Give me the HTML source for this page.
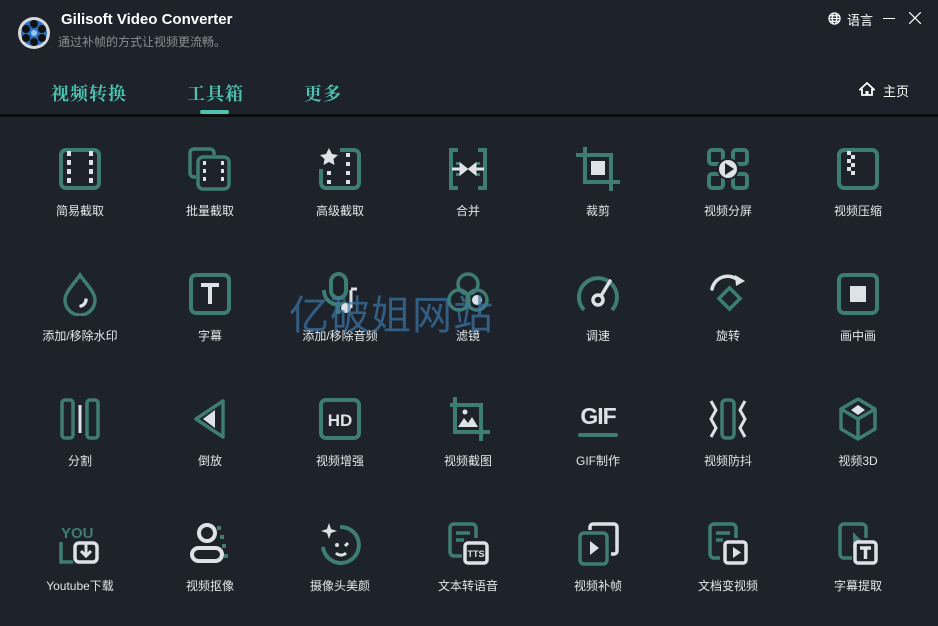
<!DOCTYPE html>
<html><head><meta charset="utf-8"><style>
*{margin:0;padding:0;box-sizing:border-box}
body{width:938px;height:626px;background:#1e222a;font-family:"Liberation Sans","Noto Sans CJK SC",sans-serif;color:#e3e6ea;position:relative;overflow:hidden}
.a{position:absolute}
.cell{position:absolute;width:130px;text-align:center}
.cell svg{display:block;margin:0 auto;width:44px;height:44px}
.cell span{display:block;margin-top:12px;font-size:12px;color:#e3e6ea;line-height:16px}
.tab{position:absolute;top:80px;font-family:"Noto Serif CJK SC","Noto Sans CJK SC",serif;font-size:18px;font-weight:bold;color:#4ec2b0;letter-spacing:1px}
</style></head><body>
<svg class="a" style="left:17px;top:16px" width="34" height="34" viewBox="0 0 34 34"><circle cx="17" cy="17" r="16" fill="#d8d8d8"/><circle cx="17" cy="17" r="13" fill="#2a6fc0"/><g fill="#111"><circle cx="17" cy="8" r="4"/><circle cx="17" cy="26" r="4"/><circle cx="9" cy="13" r="4"/><circle cx="25" cy="13" r="4"/><circle cx="9" cy="22" r="4"/><circle cx="25" cy="22" r="4"/></g><circle cx="17" cy="17" r="3" fill="#9cc4f0"/></svg>
<div class="a" style="left:61px;top:11px;font-size:15px;font-weight:bold;color:#fff">Gilisoft Video Converter</div>
<div class="a" style="left:58px;top:33px;font-size:12px;color:#8a8f96">通过补帧的方式让视频更流畅。</div>
<svg class="a" style="left:828px;top:12px" width="13" height="13" viewBox="0 0 14 14" fill="none" stroke="#fff" stroke-width="1.3"><circle cx="7" cy="7" r="6"/><ellipse cx="7" cy="7" rx="2.5" ry="6"/><path d="M1 7h12M2 4h10M2 10h10"/></svg>
<div class="a" style="left:847px;top:10px;font-size:13px;color:#fff">语言</div>
<div class="a" style="left:883px;top:18px;width:12px;height:1px;background:#fff"></div>
<svg class="a" style="left:909px;top:12px" width="12" height="12" viewBox="0 0 12 12" stroke="#fff" stroke-width="1.2"><path d="M0 0L12 12M12 0L0 12"/></svg>
<svg class="a" style="left:859px;top:82px" width="16" height="14" viewBox="0 0 16 14"><path d="M8 1L1 7.5h2V13h10V7.5h2z" fill="none" stroke="#fff" stroke-width="1.8"/><rect x="6.5" y="9" width="3" height="4" fill="#fff"/></svg>
<div class="a" style="left:883px;top:81px;font-size:13px;color:#fff">主页</div>
<div class="tab" style="left:51px">视频转换</div>
<div class="tab" style="left:187px">工具箱</div>
<div class="tab" style="left:304px">更多</div>
<div class="a" style="left:200px;top:110px;width:29px;height:4px;border-radius:2px;background:#4ec2b0"></div>
<div class="a" style="left:0;top:114px;width:938px;height:3px;background:#0a0b0d"></div>

<!-- row1 -->
<div class="cell" style="left:15px;top:147px"><svg viewBox="0 0 44 44"><rect x="3" y="3" width="38" height="38" rx="5" fill="none" stroke="#3d7d74" stroke-width="4"/><g fill="#dde2e8"><rect x="9" y="4" width="4" height="5"/><rect x="9" y="13" width="4" height="5"/><rect x="9" y="22" width="4" height="5"/><rect x="9" y="31" width="4" height="5"/><rect x="31" y="4" width="4" height="5"/><rect x="31" y="13" width="4" height="5"/><rect x="31" y="22" width="4" height="5"/><rect x="31" y="31" width="4" height="5"/></g></svg><span>简易截取</span></div>
<div class="cell" style="left:145px;top:147px"><svg viewBox="0 0 44 44" fill="none" stroke="#3d7d74" stroke-width="3.5"><path d="M8 30H6a4 4 0 0 1-4-4V6a4 4 0 0 1 4-4h16a4 4 0 0 1 4 4v2"/><rect x="10" y="10" width="31" height="32" rx="5"/><g fill="#dde2e8" stroke="none"><rect x="15" y="14" width="3" height="4"/><rect x="15" y="22" width="3" height="4"/><rect x="15" y="30" width="3" height="4"/><rect x="33" y="14" width="3" height="4"/><rect x="33" y="22" width="3" height="4"/><rect x="33" y="30" width="3" height="4"/></g></svg><span>批量截取</span></div>
<div class="cell" style="left:275px;top:147px"><svg viewBox="0 0 44 44" fill="none" stroke="#3d7d74" stroke-width="4"><path d="M22 3h14a5 5 0 0 1 5 5v28a5 5 0 0 1-5 5H8a5 5 0 0 1-5-5V22"/><path d="M11 1l3 6 6 1-4.5 4 1 6-5.5-3-5.5 3 1-6L2 8l6-1z" fill="#dde2e8" stroke="none"/><g fill="#dde2e8" stroke="none"><rect x="28" y="6" width="4" height="4"/><rect x="28" y="15" width="4" height="4"/><rect x="28" y="24" width="4" height="4"/><rect x="28" y="33" width="4" height="4"/><rect x="9" y="24" width="4" height="4"/><rect x="9" y="33" width="4" height="4"/></g></svg><span>高级截取</span></div>
<div class="cell" style="left:403px;top:147px"><svg viewBox="0 0 44 44" fill="none" stroke="#3d7d74" stroke-width="4"><path d="M12 3H5v38h7M12 18v-3M12 29v-3M32 3h7v38h-7M32 18v-3M32 29v-3"/><path d="M6 22h9M15 18v8l5-4zM38 22h-9M29 18v8l-5-4z" fill="#dde2e8" stroke="#dde2e8" stroke-width="3"/></svg><span>合并</span></div>
<div class="cell" style="left:533px;top:147px"><svg viewBox="0 0 44 44" fill="none" stroke="#3d7d74" stroke-width="4"><path d="M9 0v35h35M0 8h35v36"/><rect x="15" y="14" width="14" height="14" fill="#dde2e8" stroke="none"/></svg><span>裁剪</span></div>
<div class="cell" style="left:663px;top:147px"><svg viewBox="0 0 44 44" fill="none" stroke="#3d7d74" stroke-width="4"><rect x="3" y="3" width="14" height="14" rx="3"/><rect x="27" y="3" width="14" height="14" rx="3"/><rect x="3" y="27" width="14" height="14" rx="3"/><rect x="27" y="27" width="14" height="14" rx="3"/><circle cx="22" cy="22" r="10" fill="#dde2e8" stroke="#1e222a" stroke-width="2"/><path d="M19 16v12l9-6z" fill="#1e222a" stroke="none"/></svg><span>视频分屏</span></div>
<div class="cell" style="left:793px;top:147px"><svg viewBox="0 0 44 44"><rect x="3" y="3" width="38" height="38" rx="5" fill="none" stroke="#3d7d74" stroke-width="4"/><g fill="#dde2e8"><rect x="11" y="4" width="4" height="4"/><rect x="15" y="8" width="4" height="4"/><rect x="11" y="12" width="4" height="4"/><rect x="15" y="16" width="4" height="4"/><rect x="11" y="20" width="4" height="4"/><rect x="15" y="24" width="4" height="4"/></g></svg><span>视频压缩</span></div>
<!-- row2 -->
<div class="cell" style="left:15px;top:272px"><svg viewBox="0 0 44 44" fill="none"><path d="M22 3C16 12 7 20 7 28a15 15 0 0 0 30 0C37 20 28 12 22 3z" stroke="#3d7d74" stroke-width="3.5"/><path d="M28 28a7 7 0 0 1-5 6" stroke="#dde2e8" stroke-width="3.5" stroke-linecap="round"/></svg><span>添加/移除水印</span></div>
<div class="cell" style="left:145px;top:272px"><svg viewBox="0 0 44 44"><rect x="3" y="3" width="38" height="38" rx="5" fill="none" stroke="#3d7d74" stroke-width="4"/><path d="M13 13h18M22 13v19" stroke="#dde2e8" stroke-width="4"/></svg><span>字幕</span></div>
<div class="cell" style="left:275px;top:272px"><svg viewBox="0 0 44 44" fill="none" stroke="#3d7d74" stroke-width="4"><rect x="13" y="2" width="15" height="24" rx="7.5"/><path d="M6 18a14 14 0 0 0 22 12M20 33v9"/><path d="M33 18v18" stroke="#dde2e8" stroke-width="3"/><path d="M33 17h6" stroke="#dde2e8" stroke-width="3"/><circle cx="28" cy="36" r="5" fill="#dde2e8" stroke="none"/></svg><span>添加/移除音频</span></div>
<div class="cell" style="left:403px;top:272px"><svg viewBox="0 0 44 44" fill="none" stroke="#3d7d74" stroke-width="3.5"><circle cx="22" cy="12" r="10"/><circle cx="13" cy="28" r="10"/><circle cx="31" cy="28" r="10"/><circle cx="31" cy="28" r="5" fill="#dde2e8" stroke="none"/></svg><span>滤镜</span></div>
<div class="cell" style="left:533px;top:272px"><svg viewBox="0 0 44 44" fill="none"><path d="M8 38A19 19 0 1 1 36 38" stroke="#3d7d74" stroke-width="4"/><path d="M25 24L34 9" stroke="#dde2e8" stroke-width="3.5" stroke-linecap="round"/><circle cx="22" cy="28" r="5" stroke="#dde2e8" stroke-width="3.5"/></svg><span>调速</span></div>
<div class="cell" style="left:663px;top:272px"><svg viewBox="0 0 44 44" fill="none"><path d="M6 17a16 16 0 0 1 26-9" stroke="#dde2e8" stroke-width="3.5" stroke-linecap="round"/><path d="M29 3l10 6-9 5z" fill="#dde2e8"/><rect x="16" y="19" width="15" height="15" transform="rotate(45 23.5 26.5)" stroke="#3d7d74" stroke-width="3.5"/></svg><span>旋转</span></div>
<div class="cell" style="left:793px;top:272px"><svg viewBox="0 0 44 44"><rect x="3" y="3" width="38" height="38" rx="5" fill="none" stroke="#3d7d74" stroke-width="4"/><rect x="14" y="14" width="16" height="16" fill="#dde2e8"/></svg><span>画中画</span></div>
<!-- row3 -->
<div class="cell" style="left:15px;top:397px"><svg viewBox="0 0 44 44" fill="none" stroke="#3d7d74" stroke-width="3.5"><rect x="4" y="3" width="11" height="38" rx="3"/><rect x="29" y="3" width="11" height="38" rx="3"/><path d="M22 8v28" stroke="#dde2e8" stroke-width="3"/></svg><span>分割</span></div>
<div class="cell" style="left:145px;top:397px"><svg viewBox="0 0 44 44" fill="none"><path d="M35 4v36L8 22z" stroke="#3d7d74" stroke-width="3.5" stroke-linejoin="round"/><path d="M27 13v18l-12-9z" fill="#dde2e8"/></svg><span>倒放</span></div>
<div class="cell" style="left:275px;top:397px"><svg viewBox="0 0 44 44"><rect x="3" y="3" width="38" height="38" rx="5" fill="none" stroke="#3d7d74" stroke-width="4"/><text x="22" y="29" text-anchor="middle" font-family="Liberation Sans" font-weight="bold" font-size="17" fill="#dde2e8">HD</text></svg><span>视频增强</span></div>
<div class="cell" style="left:403px;top:397px"><svg viewBox="0 0 44 44" fill="none" stroke="#3d7d74" stroke-width="4"><path d="M9 0v35h35M4 8h31v36"/><path d="M12 30l6-9 4 5 4-6 6 10z" fill="#dde2e8" stroke="none"/><circle cx="19" cy="15" r="2.5" fill="#dde2e8" stroke="none"/></svg><span>视频截图</span></div>
<div class="cell" style="left:533px;top:397px"><svg viewBox="0 0 44 44"><text x="22" y="27" text-anchor="middle" font-family="Liberation Sans" font-weight="bold" font-size="23" fill="#dde2e8" letter-spacing="-1">GIF</text><rect x="2" y="36" width="40" height="4" rx="2" fill="#3d7d74"/></svg><span>GIF制作</span></div>
<div class="cell" style="left:663px;top:397px"><svg viewBox="0 0 44 44" fill="none"><rect x="16" y="3" width="12" height="38" rx="4" stroke="#3d7d74" stroke-width="3.5"/><path d="M5 4l5 9-5 9 5 9-5 9M39 4l-5 9 5 9-5 9 5 9" stroke="#dde2e8" stroke-width="3"/></svg><span>视频防抖</span></div>
<div class="cell" style="left:793px;top:397px"><svg viewBox="0 0 44 44" fill="none" stroke="#3d7d74" stroke-width="3.5" stroke-linejoin="round"><path d="M22 2l17 10v20L22 42 5 32V12zM5 12l17 10 17-10M22 22v20"/><path d="M22 8l7 5-7 5-7-5z" fill="#dde2e8" stroke="none"/></svg><span>视频3D</span></div>
<!-- row4 -->
<div class="cell" style="left:15px;top:522px"><svg viewBox="0 0 44 44"><text x="3" y="16" font-family="Liberation Sans" font-weight="bold" font-size="15" fill="#3d7d74">YOU</text><path d="M3 20v20h12" fill="none" stroke="#3d7d74" stroke-width="3.5"/><rect x="17" y="21" width="22" height="19" rx="4" fill="none" stroke="#dde2e8" stroke-width="3.5"/><path d="M28 22v11M23 29l5 5 5-5" fill="none" stroke="#dde2e8" stroke-width="3"/></svg><span>Youtube下载</span></div>
<div class="cell" style="left:145px;top:522px"><svg viewBox="0 0 44 44" fill="none" stroke="#dde2e8" stroke-width="4"><circle cx="19" cy="11" r="8"/><rect x="4" y="26" width="30" height="13" rx="6.5"/><path d="M31 4v4M34 13v4M36 22v4M38 32v4" stroke="#3d7d74"/></svg><span>视频抠像</span></div>
<div class="cell" style="left:275px;top:522px"><svg viewBox="0 0 44 44" fill="none"><path d="M22 5a18 18 0 1 1-17 20" stroke="#3d7d74" stroke-width="4"/><path d="M11 1l2 6 6 2-6 2-2 6-2-6-6-2 6-2z" fill="#dde2e8"/><circle cx="19" cy="23" r="2" fill="#dde2e8"/><path d="M27 24l3-3M18 31a7 7 0 0 0 10 0" stroke="#dde2e8" stroke-width="3"/></svg><span>摄像头美颜</span></div>
<div class="cell" style="left:403px;top:522px"><svg viewBox="0 0 44 44" fill="none"><path d="M16 34H8a4 4 0 0 1-4-4V6a4 4 0 0 1 4-4h18a4 4 0 0 1 4 4v10" stroke="#3d7d74" stroke-width="3.5"/><path d="M10 11h14M10 18h8" stroke="#3d7d74" stroke-width="3.5"/><rect x="19" y="21" width="22" height="20" rx="3" fill="#1e222a" stroke="#dde2e8" stroke-width="3.5"/><text x="30" y="35" text-anchor="middle" font-family="Liberation Sans" font-weight="bold" font-size="9" fill="#dde2e8">TTS</text></svg><span>文本转语音</span></div>
<div class="cell" style="left:533px;top:522px"><svg viewBox="0 0 44 44" fill="none"><path d="M14 8V5a3 3 0 0 1 3-3h21a3 3 0 0 1 3 3v24a3 3 0 0 1-3 3h-3" stroke="#dde2e8" stroke-width="3.5"/><rect x="4" y="11" width="27" height="31" rx="4" stroke="#3d7d74" stroke-width="3.5"/><path d="M14 19v14l9-7z" fill="#dde2e8"/></svg><span>视频补帧</span></div>
<div class="cell" style="left:663px;top:522px"><svg viewBox="0 0 44 44" fill="none"><path d="M14 36H8a4 4 0 0 1-4-4V6a4 4 0 0 1 4-4h18a4 4 0 0 1 4 4v10" stroke="#3d7d74" stroke-width="3.5"/><path d="M10 11h14M10 18h7" stroke="#3d7d74" stroke-width="3.5"/><rect x="19" y="20" width="21" height="21" rx="3" fill="#1e222a" stroke="#dde2e8" stroke-width="3.5"/><path d="M27 25v11l8-5.5z" fill="#dde2e8"/></svg><span>文档变视频</span></div>
<div class="cell" style="left:793px;top:522px"><svg viewBox="0 0 44 44" fill="none"><path d="M16 36H8a4 4 0 0 1-4-4V6a4 4 0 0 1 4-4h18a4 4 0 0 1 4 4v10" stroke="#3d7d74" stroke-width="3.5"/><path d="M17 10v16l8-8z" fill="#3d7d74"/><rect x="19" y="20" width="21" height="21" rx="3" fill="#1e222a" stroke="#dde2e8" stroke-width="3.5"/><path d="M24 26h11M29.5 26v11" stroke="#dde2e8" stroke-width="3.5"/></svg><span>字幕提取</span></div>

<div class="a" style="left:289px;top:288px;font-size:40px;color:rgba(60,120,170,0.7);font-family:'Noto Sans CJK SC',sans-serif;line-height:48px;letter-spacing:1px">亿破姐网站</div>
</body></html>
